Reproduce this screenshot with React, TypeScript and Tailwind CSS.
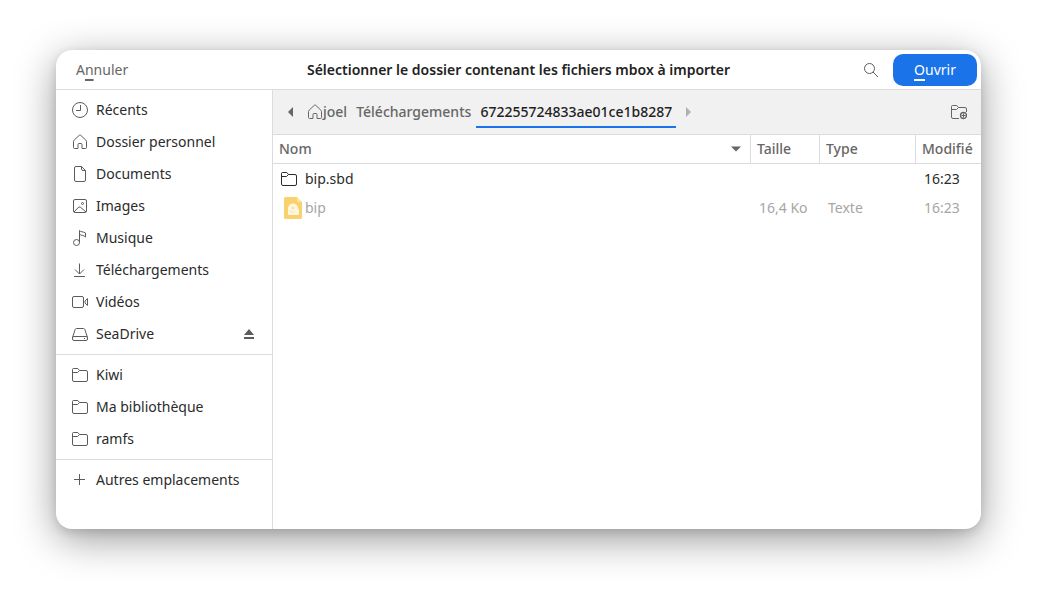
import type { ReactNode } from 'react';

type IconProps = { className?: string };

function Icon({ children, className = '' }: { children: ReactNode; className?: string }) {
  return (
    <svg
      viewBox="0 0 16 16"
      className={`size-4 shrink-0 ${className}`}
      fill="none"
      stroke="currentColor"
      strokeLinejoin="round"
      aria-hidden="true"
    >
      {children}
    </svg>
  );
}

const ClockIcon = () => (
  <Icon>
    <circle cx="8" cy="8" r="7.5" />
    <path d="M8.5 3v5.5H4" />
  </Icon>
);

const HomeIcon = ({ className }: IconProps) => (
  <Icon className={className}>
    <path d="M6 14.5V10.5a1 1 0 0 1 1-1h2a1 1 0 0 1 1 1v4h3.5a1 1 0 0 0 1-1V7.6a2 2 0 0 0-.7-1.5L8.7 1.3a1 1 0 0 0-1.4 0L2.2 6.1a2 2 0 0 0-.7 1.5v5.9a1 1 0 0 0 1 1z" />
  </Icon>
);

const DocumentIcon = () => (
  <Icon>
    <path d="M4 .5h5.5l4 4V14a1.5 1.5 0 0 1-1.5 1.5H4A1.5 1.5 0 0 1 2.5 14V2A1.5 1.5 0 0 1 4 .5z" />
    <path d="M9.5.5V3A1.5 1.5 0 0 0 11 4.5h2.5" />
  </Icon>
);

const ImageIcon = () => (
  <Icon>
    <rect x="1.5" y="1.5" width="13" height="13" rx="1.5" />
    <circle cx="10.5" cy="5.5" r="1" />
    <path d="M2 14l4.800-5 1.400 0L14 14" />
  </Icon>
);

const MusicIcon = () => (
  <Icon>
    <circle cx="4.5" cy="12.5" r="3" />
    <path d="M7.5 12.5V.5c1 1.700 4 1 6 2.500v4c-1.500-1.800-4.500-1.500-6-2.700" />
  </Icon>
);

const DownloadIcon = () => (
  <Icon>
    <path d="M7.5 1.500V12M3 7.500L7.500 12 12 7.500M2 14.500h11" />
  </Icon>
);

const VideoIcon = () => (
  <Icon>
    <rect x=".5" y="2.5" width="11" height="11" rx="1.5" />
    <path d="M13 7l2.500-2.500v7L13 9z" />
  </Icon>
);

const DriveIcon = () => (
  <Icon>
    <path d="M.5 11.500L3.100 3.600A1.600 1.600 0 0 1 4.600 2.500h6.800a1.600 1.600 0 0 1 1.500 1.100l2.600 7.900" />
    <rect x=".5" y="10.5" width="15" height="4" rx="1.5" />
    <path d="M12 12.500h1" />
  </Icon>
);

const FolderIcon = ({ className }: IconProps) => (
  <Icon className={className}>
    <path d="M.5 13V2.500a1 1 0 0 1 1-1h4.300l1.700 2h6.500a1.500 1.500 0 0 1 1.500 1.500v8a1.500 1.500 0 0 1-1.500 1.500H2A1.500 1.500 0 0 1 .5 13z" />
    <path d="M.5 5.500h5l2-2" />
  </Icon>
);

const NewFolderIcon = () => (
  <Icon>
    <path d="M8 14.500H2A1.500 1.500 0 0 1 .5 13V2.500a1 1 0 0 1 1-1h4.300l1.700 2h6.500a1.500 1.500 0 0 1 1.500 1.500v3" />
    <path d="M.5 5.500h5l2-2" />
    <circle cx="12.5" cy="11.5" r="3" strokeWidth="1.3" />
    <path d="M12.500 9.500v4M10.500 11.500h4" />
  </Icon>
);

const PlusIcon = () => (
  <Icon>
    <path d="M7.500 2v11M2 7.500h11" />
  </Icon>
);

const SearchIcon = () => (
  <Icon>
    <circle cx="6.5" cy="6.5" r="5" />
    <path d="M10 10l5 5" />
  </Icon>
);

const EjectIcon = () => (
  <Icon>
    <path d="M8 3l5 6H3zM3 11h10v2H3z" fill="currentColor" stroke="none" />
  </Icon>
);

const MailboxFileIcon = () => (
  <svg viewBox="0 0 18 22" className="h-[22px] w-[18px] shrink-0" aria-hidden="true">
    <path d="M1.500 0H13l5 5v15.500a1.500 1.500 0 0 1-1.500 1.500h-15A1.500 1.500 0 0 1 0 20.500v-19A1.500 1.500 0 0 1 1.500 0z" fill="#f9d26b" />
    <path d="M13 0l5 5h-3.500A1.500 1.500 0 0 1 13 3.500z" fill="#fce6a8" />
    <path d="M4 17v-5a5 5 0 0 1 10-1l1 2v4a1 1 0 0 1-1 1H5a1 1 0 0 1-1-1z" fill="#fef6e0" />
    <circle cx="9" cy="11" r="1.5" fill="#fbe3a0" />
    <path d="M5 13.500l4 2 2-1.200" fill="none" stroke="#fbe3a0" strokeWidth=".8" />
  </svg>
);

const places = [
  { name: 'Récents', icon: ClockIcon },
  { name: 'Dossier personnel', icon: HomeIcon },
  { name: 'Documents', icon: DocumentIcon },
  { name: 'Images', icon: ImageIcon },
  { name: 'Musique', icon: MusicIcon },
  { name: 'Téléchargements', icon: DownloadIcon },
  { name: 'Vidéos', icon: VideoIcon },
  { name: 'SeaDrive', icon: DriveIcon, ejectable: true },
];

const bookmarks = [
  { name: 'Kiwi', icon: FolderIcon },
  { name: 'Ma bibliothèque', icon: FolderIcon },
  { name: 'ramfs', icon: FolderIcon },
];

const others = [{ name: 'Autres emplacements', icon: PlusIcon }];

const groups: { name: string; icon: (props: IconProps) => ReactNode; ejectable?: boolean }[][] = [
  places,
  bookmarks,
  others,
];

function Sidebar() {
  return (
    <nav className="w-[217px] shrink-0 border-r border-[#dcdcdc] text-[#2b2b2b]">
      {groups.map((group, index) => (
        <ul key={index} className="border-b border-[#dcdcdc] py-1 last:border-b-0">
          {group.map((item) => (
            <li key={item.name} className="flex h-8 items-center pr-[15px]">
              <button type="button" className="flex h-8 flex-1 items-center gap-2 pl-4 text-left">
                <span className="text-[#5c5c5c]">
                  <item.icon />
                </span>
                {item.name}
              </button>
              {item.ejectable && (
                <button type="button" aria-label="Éjecter" className="text-[#5c5c5c]">
                  <EjectIcon />
                </button>
              )}
            </li>
          ))}
        </ul>
      ))}
    </nav>
  );
}

function PathBar() {
  return (
    <div className="flex h-[45px] items-center border-b border-[#dcdcdc] bg-[#f1f1f1] pr-3.5 pl-2.5 text-[#666]">
      <button type="button" aria-label="Précédent" className="mr-2">
        <Icon>
          <path d="M10 3v10L5 8z" fill="currentColor" stroke="none" />
        </Icon>
      </button>
      <button type="button" className="flex h-8 items-center font-medium">
        <HomeIcon />
        joel
      </button>
      <button type="button" className="ml-1 h-8 px-[5px] font-medium">
        Téléchargements
      </button>
      <button
        type="button"
        aria-current="location"
        className="h-8 w-[200px] border-b-2 border-[#1a73e8] pt-0.5 text-center font-medium text-[#222]"
      >
        672255724833ae01ce1b8287
      </button>
      <button type="button" aria-label="Suivant" disabled className="ml-1 text-[#b0b0b0]">
        <Icon>
          <path d="M6 3v10l5-5z" fill="currentColor" stroke="none" />
        </Icon>
      </button>
      <button type="button" aria-label="Nouveau dossier" className="ml-auto">
        <NewFolderIcon />
      </button>
    </div>
  );
}

function FileTable() {
  return (
    <table className="w-full table-fixed border-separate border-spacing-0 text-left whitespace-nowrap">
      <colgroup>
        <col />
        <col className="w-[69px]" />
        <col className="w-24" />
        <col className="w-[65px]" />
      </colgroup>
      <thead>
        <tr className="h-[29px] text-[#666]">
          <th className="border-r border-b border-[#dcdcdc] p-0 px-1.5 font-medium">
            <button type="button" className="flex w-full items-center justify-between">
              Nom
              <Icon>
                <path d="M3 5.500h10L8 10.500z" fill="currentColor" stroke="none" />
              </Icon>
            </button>
          </th>
          <th className="border-r border-b border-[#dcdcdc] p-0 pl-1.5 font-medium">
            <button type="button">Taille</button>
          </th>
          <th className="border-r border-b border-[#dcdcdc] p-0 pl-1.5 font-medium">
            <button type="button">Type</button>
          </th>
          <th className="border-b border-[#dcdcdc] p-0 pl-1.5 font-medium">
            <button type="button">Modifié</button>
          </th>
        </tr>
      </thead>
      <tbody>
        <tr className="h-[29px] text-[#2b2b2b]">
          <td className="p-0 pl-2">
            <div className="flex items-center gap-2">
              <FolderIcon />
              bip.sbd
            </div>
          </td>
          <td className="p-0" />
          <td className="p-0" />
          <td className="p-0 pl-2">16:23</td>
        </tr>
        <tr className="h-[29px] text-[#a6a6a6]">
          <td className="p-0 pl-[11px]">
            <div className="flex items-center gap-[3px]">
              <MailboxFileIcon />
              bip
            </div>
          </td>
          <td className="p-0 pl-2">16,4 Ko</td>
          <td className="p-0 pl-2">Texte</td>
          <td className="p-0 pl-2">16:23</td>
        </tr>
      </tbody>
    </table>
  );
}

export default function App() {
  return (
    <div className="flex h-screen bg-white px-14 pt-[50px] pb-[63px] font-['Noto_Sans',sans-serif] text-[14px] leading-5">
      <div
        role="dialog"
        aria-labelledby="dialog-title"
        className="flex flex-1 flex-col overflow-hidden rounded-2xl bg-white shadow-[0_10px_40px_rgba(0,0,0,0.4),0_3px_10px_rgba(0,0,0,0.12)]"
      >
        <header className="grid h-10 grid-cols-[1fr_auto_1fr] items-center border-b border-[#dcdcdc] px-1">
          <button type="button" className="ml-4 justify-self-start text-[#666]">
            A<span className="underline decoration-2 underline-offset-4">n</span>nuler
          </button>
          <h1 id="dialog-title" className="font-semibold text-[#222]">
            Sélectionner le dossier contenant les fichiers mbox à importer
          </h1>
          <div className="flex items-center gap-3.5 justify-self-end">
            <button type="button" aria-label="Rechercher" className="text-[#5c5c5c]">
              <SearchIcon />
            </button>
            <button type="button" className="h-8 w-21 rounded-[10px] bg-[#1a73e8] text-white">
              <span className="underline decoration-2 underline-offset-4">O</span>uvrir
            </button>
          </div>
        </header>
        <div className="flex min-h-0 flex-1">
          <Sidebar />
          <main className="min-w-0 flex-1">
            <PathBar />
            <FileTable />
          </main>
        </div>
      </div>
    </div>
  );
}
